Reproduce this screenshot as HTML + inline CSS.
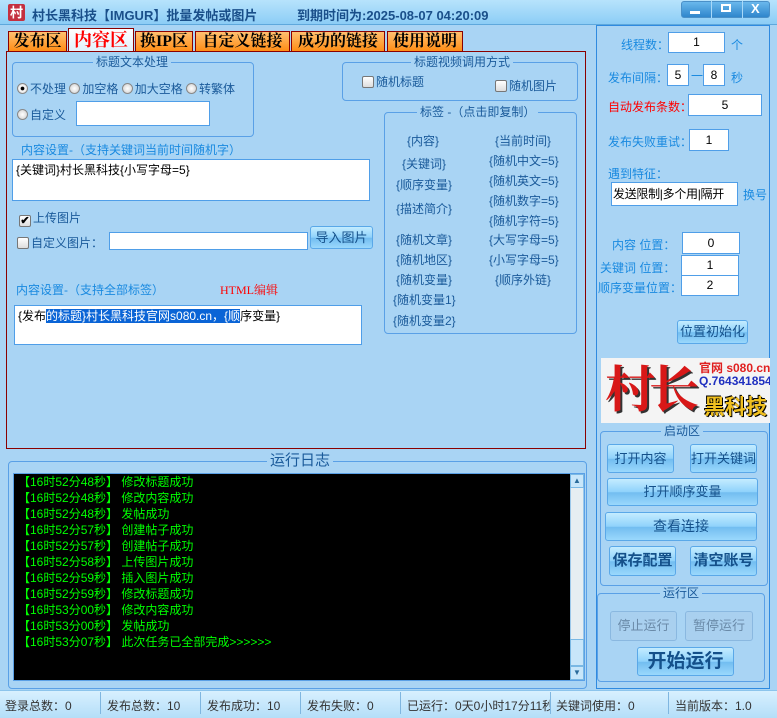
<!DOCTYPE html>
<html><head><meta charset="utf-8">
<style>
*{box-sizing:border-box;margin:0;padding:0}
html,body{width:777px;height:718px;overflow:hidden}
body{background:#a9d4f4;font-family:"Liberation Sans","Noto Sans CJK SC",sans-serif;font-size:12px;color:#1a5a9a;position:relative}
.a{position:absolute;white-space:nowrap}
.title{left:0;top:0;width:777px;height:25px;background:linear-gradient(#b7e3fc,#8ccdf6);border-bottom:1px solid #5ea8dc}
.tab{position:absolute;top:31px;height:21px;background:linear-gradient(#ffc070,#ff8a10);border:1px solid #8a0000;border-bottom:none;font-size:16px;font-weight:bold;color:#000;text-align:center;line-height:20px;font-family:"Liberation Serif","Noto Serif CJK SC",serif;white-space:nowrap}
.grp{position:absolute;border:1px solid #5aa0e6;border-radius:4px}
.gt{position:absolute;background:#a9d4f4;padding:0 3px;top:-8px;font-size:12px;color:#1a5a9a;line-height:14px;white-space:nowrap}
.inp{position:absolute;background:#fff;border:1px solid #4f9ee8;color:#000;text-align:center;font-size:12px;white-space:nowrap;overflow:hidden}
.btn{position:absolute;border:1px solid #5aa8e8;border-radius:3px;background:linear-gradient(#c4ecff 0%,#8fd2fb 50%,#72bdf0 52%,#9ad8fc 100%);color:#14508a;text-align:center;font-size:13px;white-space:nowrap}
.rad{display:inline-block;width:11px;height:11px;border-radius:50%;border:1px solid #888;background:radial-gradient(#fff,#ccc);vertical-align:-1px;margin-right:2px}
.chk{display:inline-block;width:12px;height:12px;border:1px solid #777;background:linear-gradient(#fff,#ddd);border-radius:2px;vertical-align:-2px;margin-right:2px}
.tag{position:absolute;font-size:12px;color:#1a5a9a;white-space:nowrap}
.log{position:absolute;left:18px;color:#00ff00;font-size:12px;line-height:16px;white-space:nowrap}
.lbl{position:absolute;color:#1a8ae0;font-size:12px;white-space:nowrap}
.sep{position:absolute;top:692px;width:1px;height:22px;background:#7fb6e0}
.st{position:absolute;top:697px;font-size:12px;color:#333;white-space:nowrap;overflow:hidden}
</style></head><body>
<div class="a title"></div>
<div class="a" style="left:8px;top:4px;width:17px;height:17px;background:#c43040;color:#fff;font-size:13px;font-weight:bold;text-align:center;line-height:17px;border-radius:2px">村</div>
<div class="a" style="left:32px;top:5px;font-size:13px;font-weight:bold;color:#1a4f8a">村长黑科技【IMGUR】批量发帖或图片</div>
<div class="a" style="left:297px;top:5px;font-size:13px;font-weight:bold;color:#1a4f8a">到期时间为:2025-08-07 04:20:09</div>
<div class="a" style="left:681px;top:1px;width:89px;height:17px;border:1px solid #4a90c8;border-radius:3px;background:linear-gradient(#6ab8ec,#2f86cc)"></div>
<div class="a" style="left:711px;top:1px;width:1px;height:17px;background:#a8d8f8"></div>
<div class="a" style="left:742px;top:1px;width:1px;height:17px;background:#a8d8f8"></div>
<div class="a" style="left:690px;top:11px;width:10px;height:3px;background:#fff"></div>
<div class="a" style="left:721px;top:4px;width:10px;height:8px;border:2px solid #fff"></div>
<div class="a" style="left:751px;top:1px;color:#fff;font-weight:bold;font-size:13px">X</div>

<div class="tab" style="left:8px;width:59px">发布区</div>
<div class="tab" style="left:68px;width:66px;top:28px;height:24px;background:linear-gradient(#fff,#dff0fc);color:#f00;font-size:18px;line-height:22px">内容区</div>
<div class="tab" style="left:135px;width:58px">换IP区</div>
<div class="tab" style="left:195px;width:95px">自定义链接</div>
<div class="tab" style="left:291px;width:94px">成功的链接</div>
<div class="tab" style="left:387px;width:76px">使用说明</div>
<div class="a" style="left:6px;top:51px;width:580px;height:398px;border:1px solid #8a0000"></div>

<div class="grp" style="left:12px;top:62px;width:242px;height:75px"><span class="gt" style="left:80px">标题文本处理</span></div>
<div class="a" style="left:17px;top:80px;color:#1a5a9a"><span class="rad" style="background:radial-gradient(#000 25%,#fff 35%,#ccc)"></span>不处理 <span class="rad"></span>加空格 <span class="rad"></span>加大空格 <span class="rad"></span>转繁体</div>
<div class="a" style="left:17px;top:106px;color:#1a5a9a"><span class="rad"></span>自定义</div>
<div class="inp" style="left:76px;top:101px;width:134px;height:25px"></div>
<div class="lbl" style="left:21px;top:141px">内容设置-（支持关键词当前时间随机字）</div>
<div class="inp" style="left:12px;top:159px;width:358px;height:42px;text-align:left;padding:1px 3px">{关键词}村长黑科技{小写字母=5}</div>
<div class="a" style="left:19px;top:209px;color:#1a5a9a"><span class="chk" style="text-align:center;line-height:10px;font-size:11px;color:#000;font-weight:bold">✔</span>上传图片</div>
<div class="a" style="left:17px;top:234px;color:#1a5a9a"><span class="chk"></span>自定义图片：</div>
<div class="inp" style="left:109px;top:232px;width:199px;height:18px"></div>
<div class="btn" style="left:310px;top:226px;width:63px;height:23px;line-height:21px">导入图片</div>
<div class="lbl" style="left:16px;top:281px">内容设置-（支持全部标签）</div>
<div class="a" style="left:220px;top:281px;color:#f00;font-size:12px;font-family:'Liberation Serif','Noto Serif CJK SC',serif">HTML编辑</div>
<div class="inp" style="left:14px;top:305px;width:348px;height:40px;text-align:left;padding:1px 3px">{发布<span style="background:#0a64d6;color:#fff">的标题}村长黑科技官网s080.cn，{顺</span>序变量}</div>

<div class="grp" style="left:342px;top:62px;width:236px;height:39px"><span class="gt" style="left:68px">标题视频调用方式</span></div>
<div class="a" style="left:362px;top:73px"><span class="chk"></span>随机标题</div>
<div class="a" style="left:495px;top:77px"><span class="chk"></span>随机图片</div>
<div class="grp" style="left:384px;top:112px;width:193px;height:222px"><span class="gt" style="left:32px">标签 -（点击即复制）</span></div>
<div class="tag" style="left:407px;top:132px">{内容}</div>
<div class="tag" style="left:402px;top:155px">{关键词}</div>
<div class="tag" style="left:396px;top:176px">{顺序变量}</div>
<div class="tag" style="left:396px;top:200px">{描述简介}</div>
<div class="tag" style="left:396px;top:231px">{随机文章}</div>
<div class="tag" style="left:396px;top:251px">{随机地区}</div>
<div class="tag" style="left:396px;top:271px">{随机变量}</div>
<div class="tag" style="left:393px;top:291px">{随机变量1}</div>
<div class="tag" style="left:393px;top:312px">{随机变量2}</div>
<div class="tag" style="left:495px;top:132px">{当前时间}</div>
<div class="tag" style="left:489px;top:152px">{随机中文=5}</div>
<div class="tag" style="left:489px;top:172px">{随机英文=5}</div>
<div class="tag" style="left:489px;top:192px">{随机数字=5}</div>
<div class="tag" style="left:489px;top:212px">{随机字符=5}</div>
<div class="tag" style="left:489px;top:231px">{大写字母=5}</div>
<div class="tag" style="left:489px;top:251px">{小写字母=5}</div>
<div class="tag" style="left:495px;top:271px">{顺序外链}</div>

<div class="grp" style="left:8px;top:461px;width:579px;height:228px"><span class="gt" style="left:258px;font-size:15px;top:-9px;line-height:16px">运行日志</span></div>
<div class="a" style="left:13px;top:473px;width:572px;height:208px;background:#000;border:1px solid #5aa0e6"></div>
<div class="a" style="left:570px;top:474px;width:14px;height:206px;background:#e6eef2;border:1px solid #9cc8ea"></div>
<div class="a" style="left:570px;top:474px;width:14px;height:14px;background:#c8e6fa;border:1px solid #7ab8e4;font-size:8px;text-align:center;color:#2a6a9a;line-height:12px">▲</div>
<div class="a" style="left:570px;top:639px;width:14px;height:27px;background:#c8e6fa;border:1px solid #7ab8e4"></div>
<div class="a" style="left:570px;top:666px;width:14px;height:14px;background:#c8e6fa;border:1px solid #7ab8e4;font-size:8px;text-align:center;color:#2a6a9a;line-height:12px">▼</div>
<div class="log" style="top:474px">【16时52分48秒】 修改标题成功<br>【16时52分48秒】 修改内容成功<br>【16时52分48秒】 发帖成功<br>【16时52分57秒】 创建帖子成功<br>【16时52分57秒】 创建帖子成功<br>【16时52分58秒】 上传图片成功<br>【16时52分59秒】 插入图片成功<br>【16时52分59秒】 修改标题成功<br>【16时53分00秒】 修改内容成功<br>【16时53分00秒】 发帖成功<br>【16时53分07秒】 此次任务已全部完成&gt;&gt;&gt;&gt;&gt;&gt;</div>

<div class="a" style="left:596px;top:25px;width:174px;height:664px;border:1px solid #2f8ae0"></div>
<div class="lbl" style="left:621px;top:36px">线程数：</div>
<div class="inp" style="left:668px;top:32px;width:57px;height:21px;line-height:19px">1</div>
<div class="lbl" style="left:731px;top:36px">个</div>
<div class="lbl" style="left:608px;top:69px">发布间隔：</div>
<div class="inp" style="left:667px;top:64px;width:22px;height:22px;line-height:20px">5</div>
<div class="lbl" style="left:691px;top:67px">一</div>
<div class="inp" style="left:703px;top:64px;width:22px;height:22px;line-height:20px">8</div>
<div class="lbl" style="left:731px;top:69px">秒</div>
<div class="lbl" style="left:608px;top:98px;color:#f00">自动发布条数：</div>
<div class="inp" style="left:688px;top:94px;width:74px;height:22px;line-height:20px">5</div>
<div class="lbl" style="left:608px;top:133px">发布失败重试：</div>
<div class="inp" style="left:689px;top:129px;width:40px;height:22px;line-height:20px">1</div>
<div class="lbl" style="left:608px;top:165px">遇到特征：</div>
<div class="inp" style="left:611px;top:182px;width:127px;height:24px;line-height:22px;font-size:12px;text-align:left;padding-left:1px;letter-spacing:-0.3px">发送限制|多个用|隔开</div>
<div class="lbl" style="left:743px;top:186px">换号</div>
<div class="lbl" style="left:612px;top:236px">内容 位置：</div>
<div class="inp" style="left:682px;top:232px;width:58px;height:22px;line-height:20px">0</div>
<div class="lbl" style="left:600px;top:259px">关键词 位置：</div>
<div class="inp" style="left:681px;top:255px;width:58px;height:21px;line-height:19px">1</div>
<div class="lbl" style="left:598px;top:279px">顺序变量位置：</div>
<div class="inp" style="left:681px;top:275px;width:58px;height:21px;line-height:19px">2</div>
<div class="btn" style="left:677px;top:320px;width:71px;height:24px;line-height:22px">位置初始化</div>

<div class="a" style="left:601px;top:358px;width:169px;height:65px;background:#f4f4f4;overflow:hidden">
<div class="a" style="left:4px;top:0;font-size:50px;font-weight:bold;color:#d81818;font-family:'Liberation Serif','Noto Serif CJK SC',serif;line-height:64px;letter-spacing:-6px;text-shadow:2px 2px 0 #333">村长</div>
<div class="a" style="left:98px;top:1px;font-size:12px;font-weight:bold;color:#e02020">官网 s080.cn</div>
<div class="a" style="left:98px;top:16px;font-size:12px;font-weight:bold;color:#2030c0">Q.764341854</div>
<div class="a" style="left:103px;top:33px;font-size:21px;font-weight:bold;color:#f0c020;text-shadow:1px 1px 0 #000,-1px -1px 0 #000">黑科技</div>
</div>

<div class="grp" style="left:600px;top:431px;width:168px;height:155px"><span class="gt" style="left:60px">启动区</span></div>
<div class="btn" style="left:607px;top:444px;width:67px;height:29px;line-height:27px">打开内容</div>
<div class="btn" style="left:690px;top:444px;width:67px;height:29px;line-height:27px">打开关键词</div>
<div class="btn" style="left:607px;top:478px;width:151px;height:28px;line-height:26px">打开顺序变量</div>
<div class="btn" style="left:605px;top:512px;width:152px;height:29px;line-height:27px;font-size:14px">查看连接</div>
<div class="btn" style="left:609px;top:546px;width:67px;height:30px;line-height:28px;font-size:15px;font-weight:bold">保存配置</div>
<div class="btn" style="left:690px;top:546px;width:67px;height:30px;line-height:28px;font-size:15px;font-weight:bold">清空账号</div>
<div class="grp" style="left:597px;top:593px;width:168px;height:89px"><span class="gt" style="left:62px">运行区</span></div>
<div class="btn" style="left:610px;top:611px;width:67px;height:30px;line-height:28px;background:#a9d0ef;color:#6a8aa8;border-color:#8ab8e0">停止运行</div>
<div class="btn" style="left:685px;top:611px;width:68px;height:30px;line-height:28px;background:#a9d0ef;color:#6a8aa8;border-color:#8ab8e0">暂停运行</div>
<div class="btn" style="left:637px;top:647px;width:97px;height:29px;line-height:27px;font-size:19px;font-weight:bold">开始运行</div>

<div class="a" style="left:0;top:690px;width:777px;height:28px;background:linear-gradient(#d8f0ff,#b4def8);border-top:1px solid #8cc4ec"></div>
<div class="sep" style="left:100px"></div><div class="sep" style="left:200px"></div><div class="sep" style="left:300px"></div><div class="sep" style="left:400px"></div><div class="sep" style="left:550px"></div><div class="sep" style="left:668px"></div>
<div class="st" style="left:5px">登录总数：0</div>
<div class="st" style="left:107px">发布总数：10</div>
<div class="st" style="left:207px">发布成功：10</div>
<div class="st" style="left:307px">发布失败：0</div>
<div class="st" style="left:407px;width:143px">已运行：0天0小时17分11秒</div>
<div class="st" style="left:556px">关键词使用：0</div>
<div class="st" style="left:675px">当前版本：1.0</div>
</body></html>
